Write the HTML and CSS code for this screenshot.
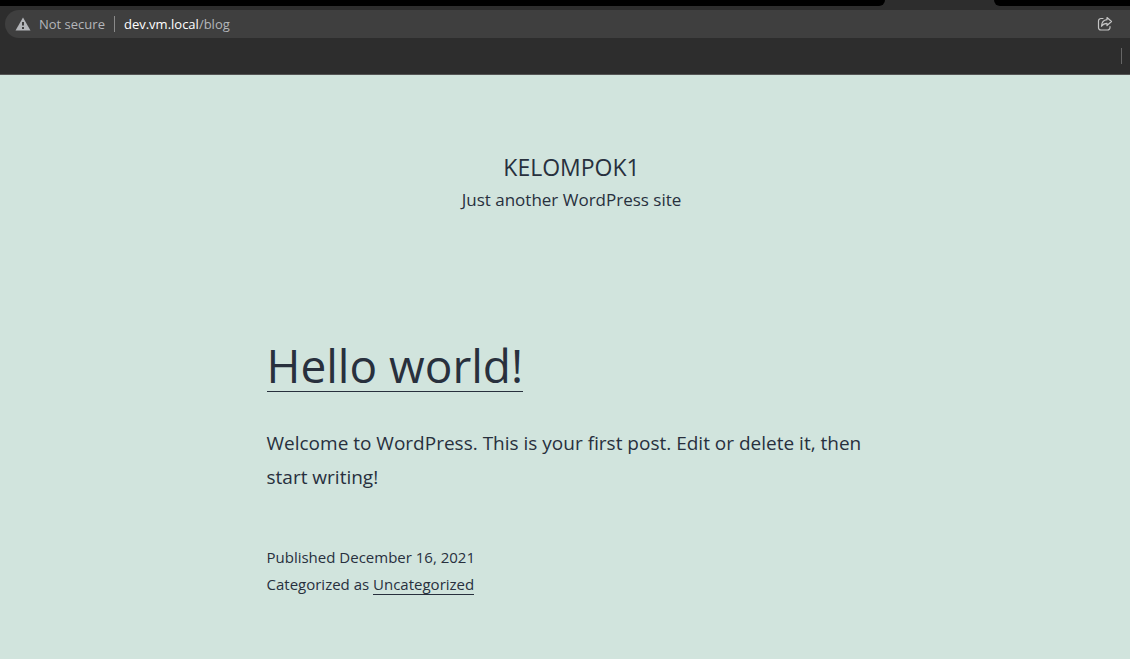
FILE: index.html
```html
<!DOCTYPE html>
<html lang="en">
<head>
<meta charset="utf-8">
<meta name="viewport" content="width=device-width, initial-scale=1">
<title>KELOMPOK1</title>
<link rel="stylesheet" href="styles.css">
</head>
<body>
<div class="browser">
  <div class="tabs">
    <div class="tab-strip tab-strip-left"></div>
    <div class="active-tab"></div>
    <div class="tab-strip tab-strip-right"></div>
  </div>
  <div class="address-bar">
    <button class="security" type="button">
      <svg class="warning-icon" viewBox="0 0 16 14" aria-hidden="true">
        <path d="M8 0.5 15.5 13.5H0.5Z" fill="#b4b6ba"/>
        <path d="M7 5h2v3.5H7zM7 10h2v2H7z" fill="#3f3f3f"/>
      </svg>
      <span>Not secure</span>
    </button>
    <span class="divider"></span>
    <div class="url"><span class="host">dev.vm.local</span>/blog</div>
    <button class="share" type="button" aria-label="Share this page">
      <svg class="share-icon" viewBox="0 0 16 16" aria-hidden="true">
        <path d="M6 2.500H4A2.500 2.500 0 0 0 1.500 5v6.500A2.500 2.500 0 0 0 4 14h6.500A2.500 2.500 0 0 0 13 11.500V10.500" />
        <path d="M10 1.500 14.500 5.500 10 9.500V7.300C7.500 7.300 5.800 8.200 4.500 10.300 4.700 6.500 6.800 4 10 3.700Z" />
      </svg>
    </button>
  </div>
  <div class="bookmarks"><span class="divider divider-short"></span></div>
</div>
<div class="site">
  <header class="site-header">
    <h1 class="site-title">KELOMPOK1</h1>
    <p class="site-tagline">Just another WordPress site</p>
  </header>
  <main>
    <article class="post">
      <h2 class="post-title"><a href="#hello-world">Hello world!</a></h2>
      <p class="post-text">Welcome to WordPress. This is your first post. Edit or delete it, then start writing!</p>
      <footer class="post-meta">
        <p>Published <time datetime="2021-12-16">December 16, 2021</time></p>
        <p>Categorized as <a href="#uncategorized">Uncategorized</a></p>
      </footer>
    </article>
  </main>
</div>
</body>
</html>
```
FILE: styles.css
```css
* {
  box-sizing: border-box;
}

body {
  margin: 0;
  min-height: 100vh;
  background: #d1e4dd;
  color: #28303d;
  font-family: "Open Sans", "Noto Sans", sans-serif;
}

h1, h2, p {
  margin: 0;
  font-weight: 400;
}

a {
  color: inherit;
  text-decoration: none;
  border-bottom: 1px solid #28303d;
}

button {
  padding: 0;
  border: 0;
  background: none;
  color: inherit;
  font: inherit;
}

.browser {
  background: #2d2d2d;
  border-bottom: 1px solid #555;
  overflow: hidden;
}

.tabs {
  display: flex;
  height: 6px;
}

.tab-strip {
  background: #000;
}

.tab-strip-left {
  flex: 1;
  border-bottom-right-radius: 6px;
}

.active-tab {
  width: 109px;
}

.tab-strip-right {
  width: 136px;
  border-bottom-left-radius: 6px;
}

.address-bar {
  display: flex;
  align-items: center;
  height: 28px;
  margin: 4px 0 0 5px;
  padding: 0 17px 0 10px;
  border-radius: 14px 0 0 14px;
  background: #3f3f3f;
  color: #b4b6ba;
  font-size: 13px;
  line-height: 28px;
}

.security {
  display: flex;
  align-items: center;
  gap: 8px;
}

.warning-icon {
  width: 16px;
  height: 14px;
}

.divider {
  width: 1px;
  height: 16px;
  margin: 0 9px;
  background: #8a8a8a;
}

.url {
  flex: 1;
}

.host {
  color: #fff;
}

.share {
  display: flex;
}

.share-icon {
  width: 16px;
  height: 16px;
  fill: none;
  stroke: #c4c4c4;
  stroke-width: 1.2;
  stroke-linejoin: round;
  stroke-linecap: round;
}

.bookmarks {
  display: flex;
  justify-content: flex-end;
  align-items: center;
  height: 36px;
}

.divider-short {
  margin: 0 8px 0 0;
  background: #666;
}

.site {
  padding: 72px 0 48px 13px;
}

.site-header {
  text-align: center;
}

.site-title {
  font-size: 23px;
  line-height: 40px;
}

.site-tagline {
  font-size: 17px;
  line-height: 26px;
}

.post {
  max-width: 610px;
  margin: 120px auto 0;
}

.post-title {
  font-size: 46px;
  line-height: 64px;
}

.post-title a {
  display: inline-block;
  line-height: 52px;
}

.post-text {
  margin-top: 29px;
  font-size: 19px;
  line-height: 34px;
}

.post-meta {
  margin-top: 50px;
  font-size: 15px;
  line-height: 27px;
}

.post-meta a {
  display: inline-block;
  line-height: 20px;
}
```
